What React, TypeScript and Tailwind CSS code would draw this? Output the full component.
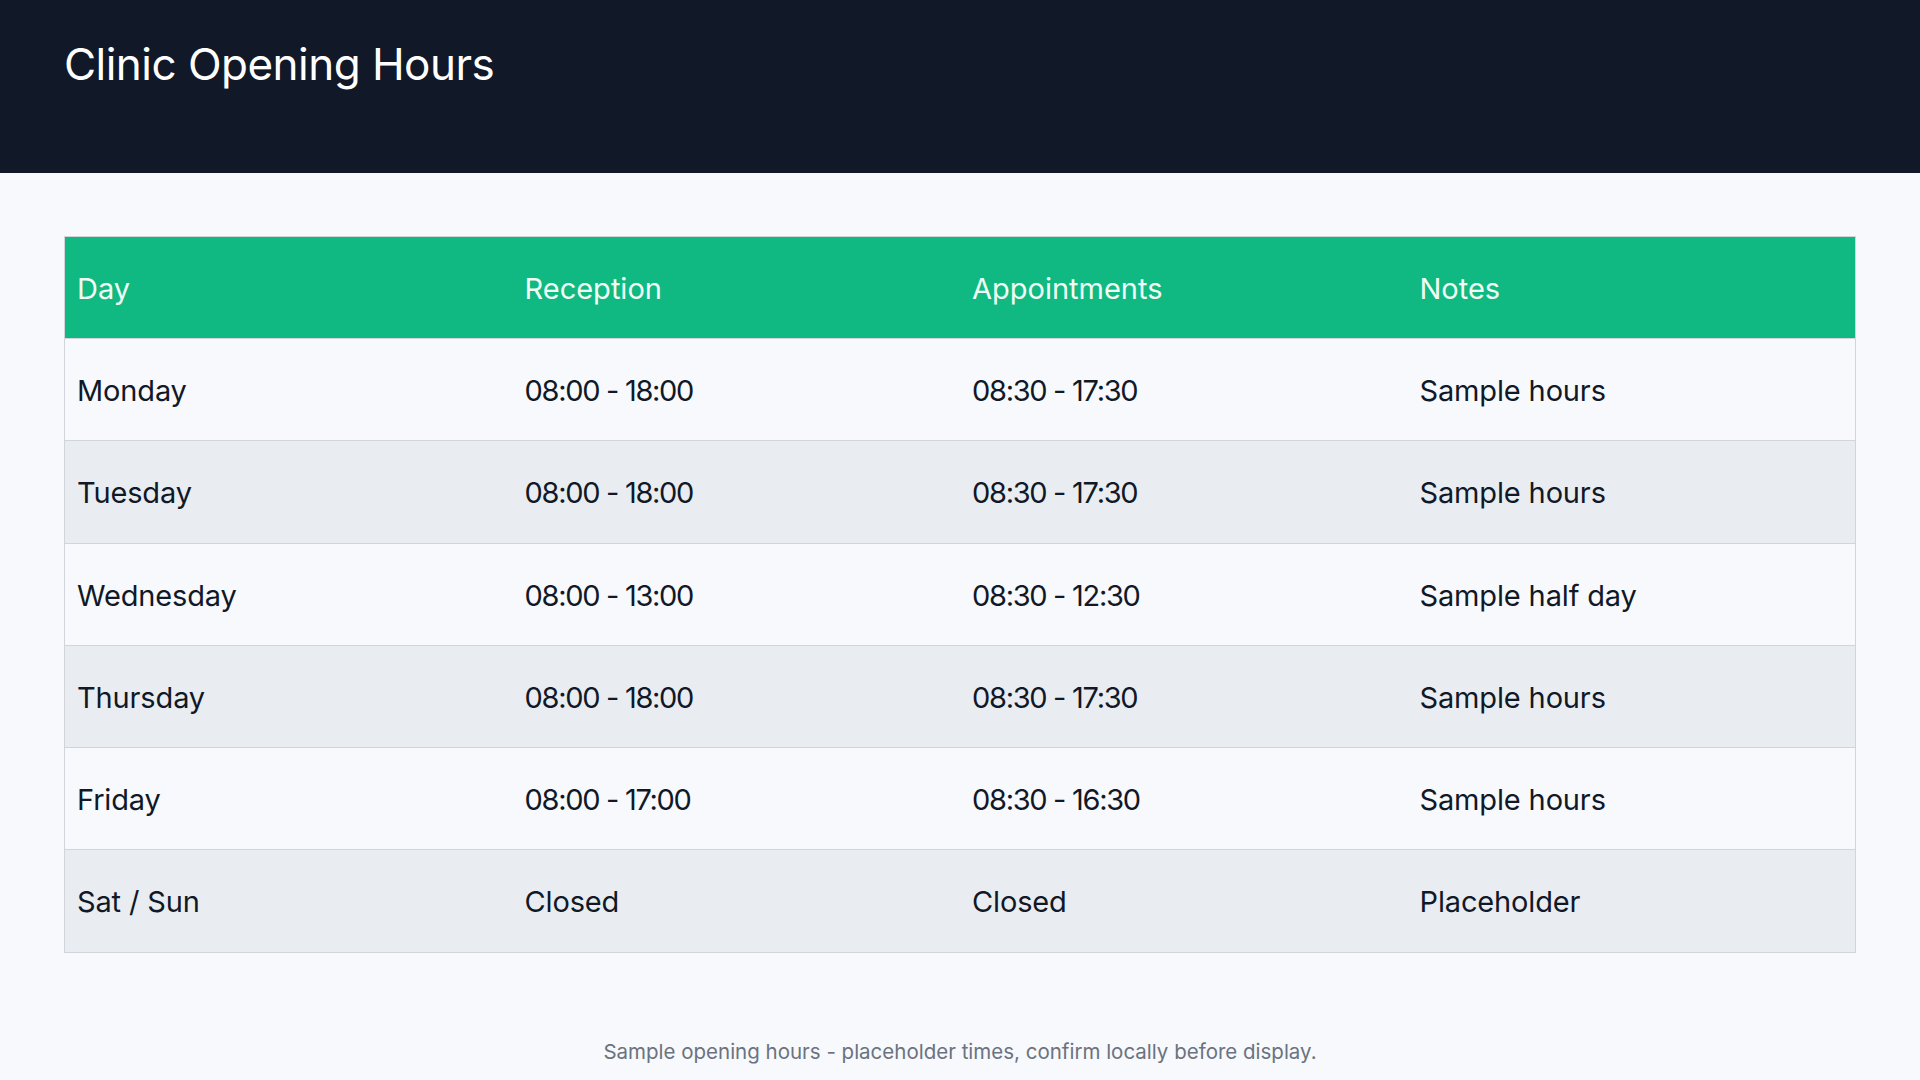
import React from "react";

const rows = [
  ["Monday", "08:00 - 18:00", "08:30 - 17:30", "Sample hours"],
  ["Tuesday", "08:00 - 18:00", "08:30 - 17:30", "Sample hours"],
  ["Wednesday", "08:00 - 13:00", "08:30 - 12:30", "Sample half day"],
  ["Thursday", "08:00 - 18:00", "08:30 - 17:30", "Sample hours"],
  ["Friday", "08:00 - 17:00", "08:30 - 16:30", "Sample hours"],
  ["Sat / Sun", "Closed", "Closed", "Placeholder"],
];

const headers = ["Day", "Reception", "Appointments", "Notes"];

export default function App() {
  return (
    <div
      className="min-h-screen bg-[#f7f9fc] overflow-hidden"
      style={{ fontFamily: "Inter, 'Noto Sans', sans-serif" }}
    >
      <header className="h-[173px] bg-[#111827] px-16 pt-[38px]">
        <h1 className="text-[44px] leading-[52px] font-normal text-white tracking-[-0.012em]">
          Clinic Opening Hours
        </h1>
      </header>

      <main className="px-16 pt-[63px]">
        <div className="border border-[#d1d5db]">
          <div className="grid grid-cols-4 bg-[#10b981]">
            {headers.map((h) => (
              <div
                key={h}
                className="px-3 pt-[31px] pb-[29px] text-[29px] leading-[41px] text-[#f0fdf4]"
              >
                {h}
              </div>
            ))}
          </div>
          {rows.map((r, i) => (
            <div
              key={r[0]}
              className={
                "grid grid-cols-4 border-t border-[#d1d5db] " +
                (i % 2 === 0 ? "bg-[#f7f9fc]" : "bg-[#e9edf1]")
              }
            >
              {r.map((c, j) => {
                const isTime = /\d/.test(c);
                return (
                  <div
                    key={j}
                    className={
                      "px-3 pt-[31px] pb-[29.3px] text-[29px] leading-[41px] text-[#111827] " +
                      (isTime ? "tracking-[-0.045em]" : "tracking-[-0.005em]")
                    }
                  >
                    {c}
                  </div>
                );
              })}
            </div>
          ))}
        </div>

        <p className="mt-[85px] text-center text-[20.5px] leading-[28px] text-[#6b7280]">
          Sample opening hours - placeholder times, confirm locally before display.
        </p>
      </main>
    </div>
  );
}
